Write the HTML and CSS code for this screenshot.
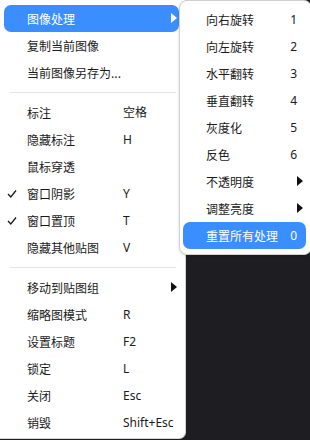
FILE: index.html
```html
<!DOCTYPE html>
<html>
<head>
<meta charset="utf-8">
<link rel="stylesheet" href="styles.css">
</head>
<body>
<div class="menu main">
  <div class="item active"><span class="label">图像处理</span><span class="arrow white"></span></div>
  <div class="item"><span class="label">复制当前图像</span></div>
  <div class="item"><span class="label">当前图像另存为...</span></div>
  <div class="sep"></div>
  <div class="item"><span class="label">标注</span><span class="key">空格</span></div>
  <div class="item"><span class="label">隐藏标注</span><span class="key">H</span></div>
  <div class="item"><span class="label">鼠标穿透</span></div>
  <div class="item"><svg class="check" width="10" height="10" viewBox="0 0 10 10"><path d="M1 5 L3.8 8 L9 1.5" fill="none" stroke="#1a1a1a" stroke-width="1.3"/></svg><span class="label">窗口阴影</span><span class="key">Y</span></div>
  <div class="item"><svg class="check" width="10" height="10" viewBox="0 0 10 10"><path d="M1 5 L3.8 8 L9 1.5" fill="none" stroke="#1a1a1a" stroke-width="1.3"/></svg><span class="label">窗口置顶</span><span class="key">T</span></div>
  <div class="item"><span class="label">隐藏其他贴图</span><span class="key">V</span></div>
  <div class="sep"></div>
  <div class="item"><span class="label">移动到贴图组</span><span class="arrow"></span></div>
  <div class="item"><span class="label">缩略图模式</span><span class="key">R</span></div>
  <div class="item"><span class="label">设置标题</span><span class="key">F2</span></div>
  <div class="item"><span class="label">锁定</span><span class="key">L</span></div>
  <div class="item"><span class="label">关闭</span><span class="key">Esc</span></div>
  <div class="item"><span class="label">销毁</span><span class="key">Shift+Esc</span></div>
</div>
<div class="menu sub">
  <div class="item"><span class="label">向右旋转</span><span class="num">1</span></div>
  <div class="item"><span class="label">向左旋转</span><span class="num">2</span></div>
  <div class="item"><span class="label">水平翻转</span><span class="num">3</span></div>
  <div class="item"><span class="label">垂直翻转</span><span class="num">4</span></div>
  <div class="item"><span class="label">灰度化</span><span class="num">5</span></div>
  <div class="item"><span class="label">反色</span><span class="num">6</span></div>
  <div class="item"><span class="label">不透明度</span><span class="arrow"></span></div>
  <div class="item"><span class="label">调整亮度</span><span class="arrow"></span></div>
  <div class="item active"><span class="label">重置所有处理</span><span class="num">0</span></div>
</div>
</body>
</html>
```

FILE: styles.css
```css
html, body {
  margin: 0;
  padding: 0;
}
body {
  background: #1e1e22;
  width: 310px;
  height: 440px;
  overflow: hidden;
  position: relative;
  font-family: "Noto Sans CJK SC", "Noto Sans", sans-serif;
  font-size: 12px;
  color: #1a1a1a;
}
.menu {
  background: #ffffff;
  box-sizing: border-box;
}
.main {
  width: 186px;
  height: 439px;
  padding: 5px 0 0 0;
  border-right: 1px solid #d6d6d6;
  border-bottom: 1px solid #d6d6d6;
  border-bottom-right-radius: 7px;
}
.sub {
  position: absolute;
  left: 179px;
  top: 0;
  width: 133px;
  padding: 5px 0 5px 0;
  border: 1px solid #d0d0d0;
  border-radius: 8px;
  box-shadow: 0 1px 3px rgba(0,0,0,0.15);
}
.sep {
  height: 1px;
  background: #e3e3e3;
  margin: 6px 9px 6px 10px;
}
.item {
  position: relative;
  height: 27px;
  display: flex;
  align-items: center;
  margin: 0 4px;
  border-radius: 7px;
  line-height: 27px;
}
.main .item {
  width: 175px;
}
.sub .item {
  margin: 0 3px;
  width: 123px;
}
.item.active {
  background: #3b8eff;
  color: #ffffff;
}
.label {
  white-space: nowrap;
}
.main .label {
  position: absolute;
  left: 23px;
}
.main .key {
  position: absolute;
  left: 119px;
  font-family: "Noto Sans", "Noto Sans CJK SC", sans-serif;
  white-space: nowrap;
}
.check {
  position: absolute;
  left: 3px;
  top: 9px;
}
.arrow {
  position: absolute;
  right: 2px;
  top: 8px;
  width: 0;
  height: 0;
  border-top: 5.5px solid transparent;
  border-bottom: 5.5px solid transparent;
  border-left: 6px solid #111;
}
.arrow.white {
  border-left-color: #ffffff;
}
.sub .label {
  position: absolute;
  left: 23px;
}
.sub .num {
  position: absolute;
  right: 9px;
  font-family: "Noto Sans", sans-serif;
}
.sub .arrow {
  right: 3px;
}
```
